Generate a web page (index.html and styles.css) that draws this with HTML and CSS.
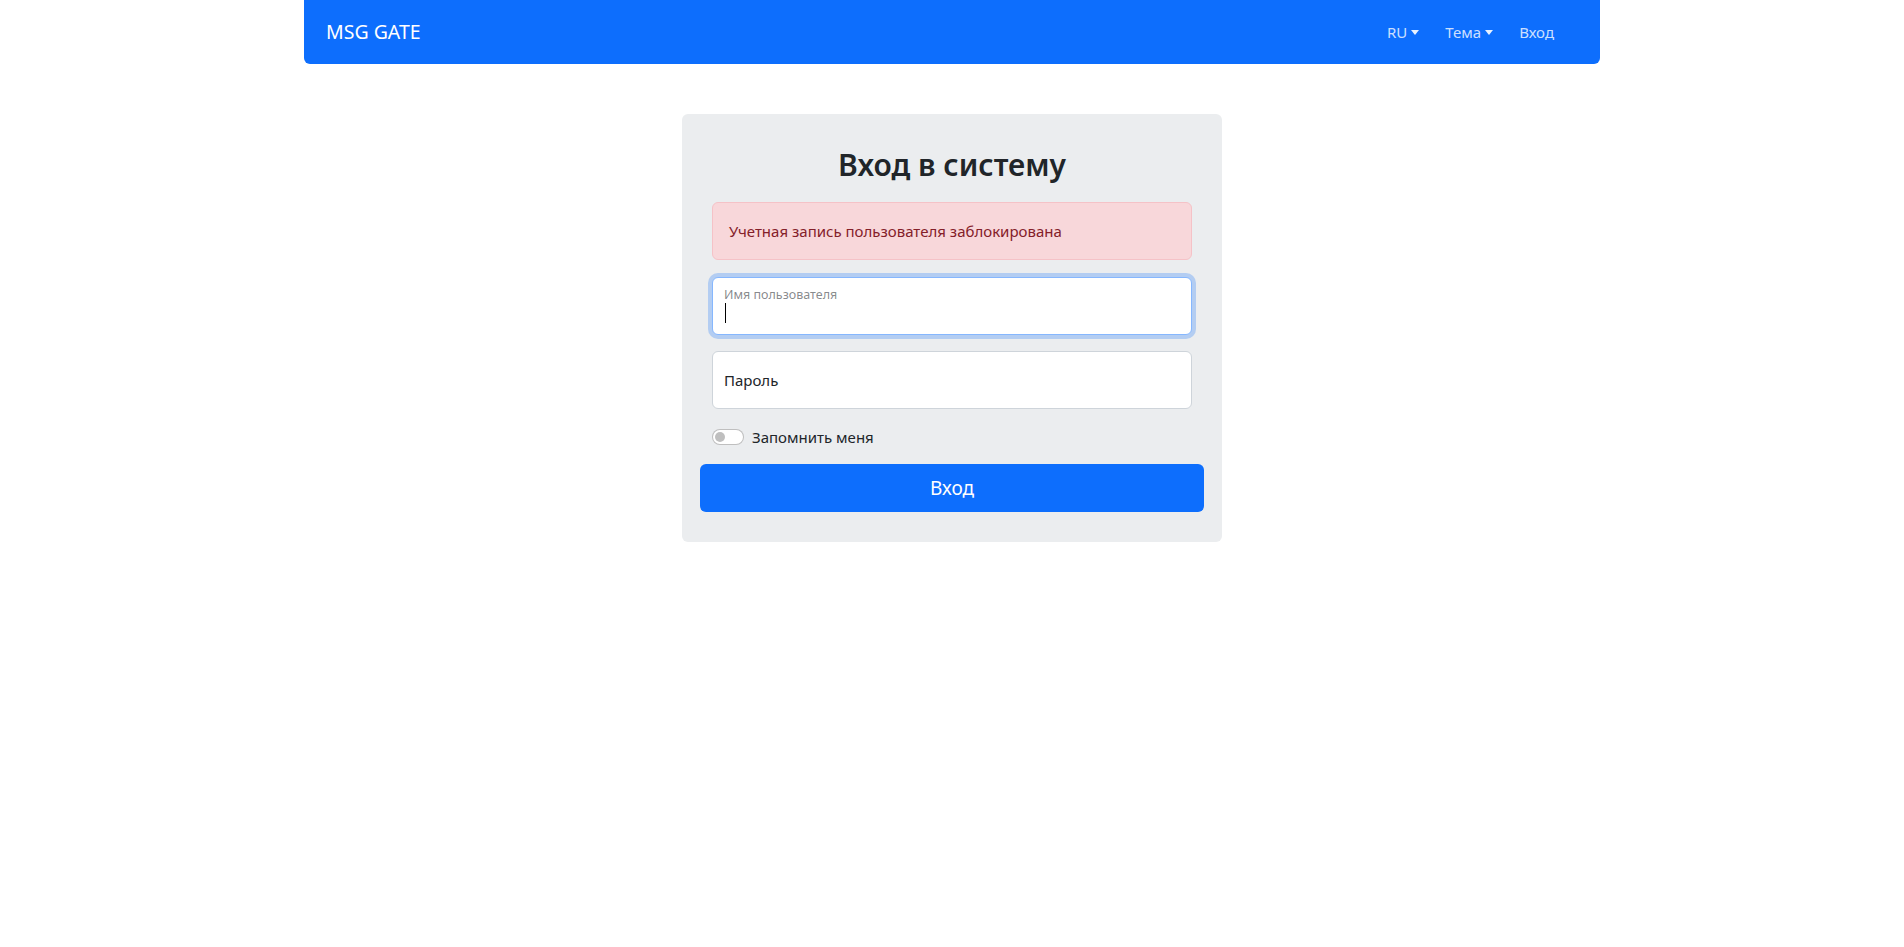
FILE: index.html
```html
<!DOCTYPE html>
<html lang="ru">
<head>
<meta charset="utf-8">
<title>MSG GATE</title>
<link rel="stylesheet" href="styles.css">
</head>
<body>
<nav class="navbar">
  <a class="brand" href="#">MSG GATE</a>
  <ul class="nav">
    <li><a class="nav-link dropdown" href="#">RU</a></li>
    <li><a class="nav-link dropdown" href="#">Тема</a></li>
    <li><a class="nav-link" href="#">Вход</a></li>
  </ul>
</nav>

<main class="page">
  <section class="card">
    <h2 class="title">Вход в систему</h2>
    <div class="form-inner">
      <div class="alert">Учетная запись пользователя заблокирована</div>
      <div class="field focused">
        <div class="input"><span class="caret"></span></div>
        <label class="float-label floated">Имя пользователя</label>
      </div>
      <div class="field">
        <div class="input"></div>
        <label class="float-label">Пароль</label>
      </div>
      <div class="check">
        <span class="switch"><span class="knob"></span></span>
        <span class="check-label">Запомнить меня</span>
      </div>
    </div>
    <button class="btn" type="button">Вход</button>
  </section>
</main>
</body>
</html>
```

FILE: styles.css
```css
* { box-sizing: border-box; }

html, body {
  margin: 0;
  padding: 0;
  background: #fff;
}

body {
  font-family: "Noto Sans", "Open Sans", "Liberation Sans", sans-serif;
  font-size: 16px;
  line-height: 1.5;
  color: #212529;
}

.navbar {
  width: 1296px;
  height: 64px;
  margin: 0 auto;
  background: #0d6efd;
  border-radius: 0 0 6px 6px;
  display: flex;
  align-items: center;
  justify-content: space-between;
  padding: 0 33px 0 22px;
}

.brand {
  color: #fff;
  text-decoration: none;
  font-size: 19.5px;
  line-height: 30px;
}

.nav {
  list-style: none;
  margin: 0;
  padding: 0;
  display: flex;
}

.nav-link {
  display: block;
  padding: 8px 13px;
  color: rgba(255, 255, 255, 0.8);
  text-decoration: none;
  font-size: 15px;
  line-height: 24px;
}

.dropdown::after {
  content: "";
  display: inline-block;
  margin-left: 4px;
  vertical-align: 3px;
  border-top: 5px solid rgba(255, 255, 255, 0.9);
  border-left: 4.5px solid transparent;
  border-right: 4.5px solid transparent;
}

.page {
  display: flex;
  justify-content: center;
  padding-top: 50px;
}

.card {
  width: 540px;
  background: #ebedef;
  border-radius: 6px;
  padding: 32px 18px 30px;
}

.title {
  margin: 0 0 18px;
  text-align: center;
  font-size: 30px;
  line-height: 38px;
  font-weight: 600;
  color: #212529;
}

.form-inner {
  padding: 0 12px;
}

.alert {
  height: 58px;
  padding: 16px 16px;
  margin-bottom: 17px;
  background: #f8d7da;
  border: 1px solid #f5c2c7;
  border-radius: 6px;
  color: #842029;
  font-size: 15px;
  line-height: 24px;
}

.field {
  position: relative;
  margin-bottom: 16px;
}

.input {
  height: 58px;
  background: #fff;
  border: 1px solid #ced4da;
  border-radius: 6px;
  padding: 0 12px;
}

.focused .input {
  border-color: #86b7fe;
  box-shadow: 0 0 0 4px rgba(13, 110, 253, 0.25);
}

.caret {
  display: block;
  width: 1px;
  height: 20px;
  margin-top: 25px;
  background: #000;
}

.float-label {
  position: absolute;
  left: 12px;
  top: 0;
  height: 58px;
  display: flex;
  align-items: center;
  font-size: 15px;
  color: #212529;
  pointer-events: none;
}

.float-label.floated {
  top: 9px;
  height: auto;
  font-size: 12.5px;
  line-height: 18px;
  color: rgba(33, 37, 41, 0.55);
}

.check {
  display: flex;
  align-items: center;
  height: 24px;
  margin-bottom: 15px;
}

.switch {
  position: relative;
  width: 32px;
  height: 16px;
  border: 1px solid rgba(0, 0, 0, 0.25);
  border-radius: 8px;
  background: #fff;
}

.knob {
  position: absolute;
  left: 2px;
  top: 2px;
  width: 10px;
  height: 10px;
  border-radius: 50%;
  background: #bfbfbf;
}

.check-label {
  margin-left: 8px;
  font-size: 15px;
  line-height: 24px;
}

.btn {
  display: block;
  width: 100%;
  height: 48px;
  border: 0;
  border-radius: 6px;
  background: #0d6efd;
  color: #fff;
  font-family: inherit;
  font-size: 19px;
  line-height: 30px;
  cursor: pointer;
}
```
